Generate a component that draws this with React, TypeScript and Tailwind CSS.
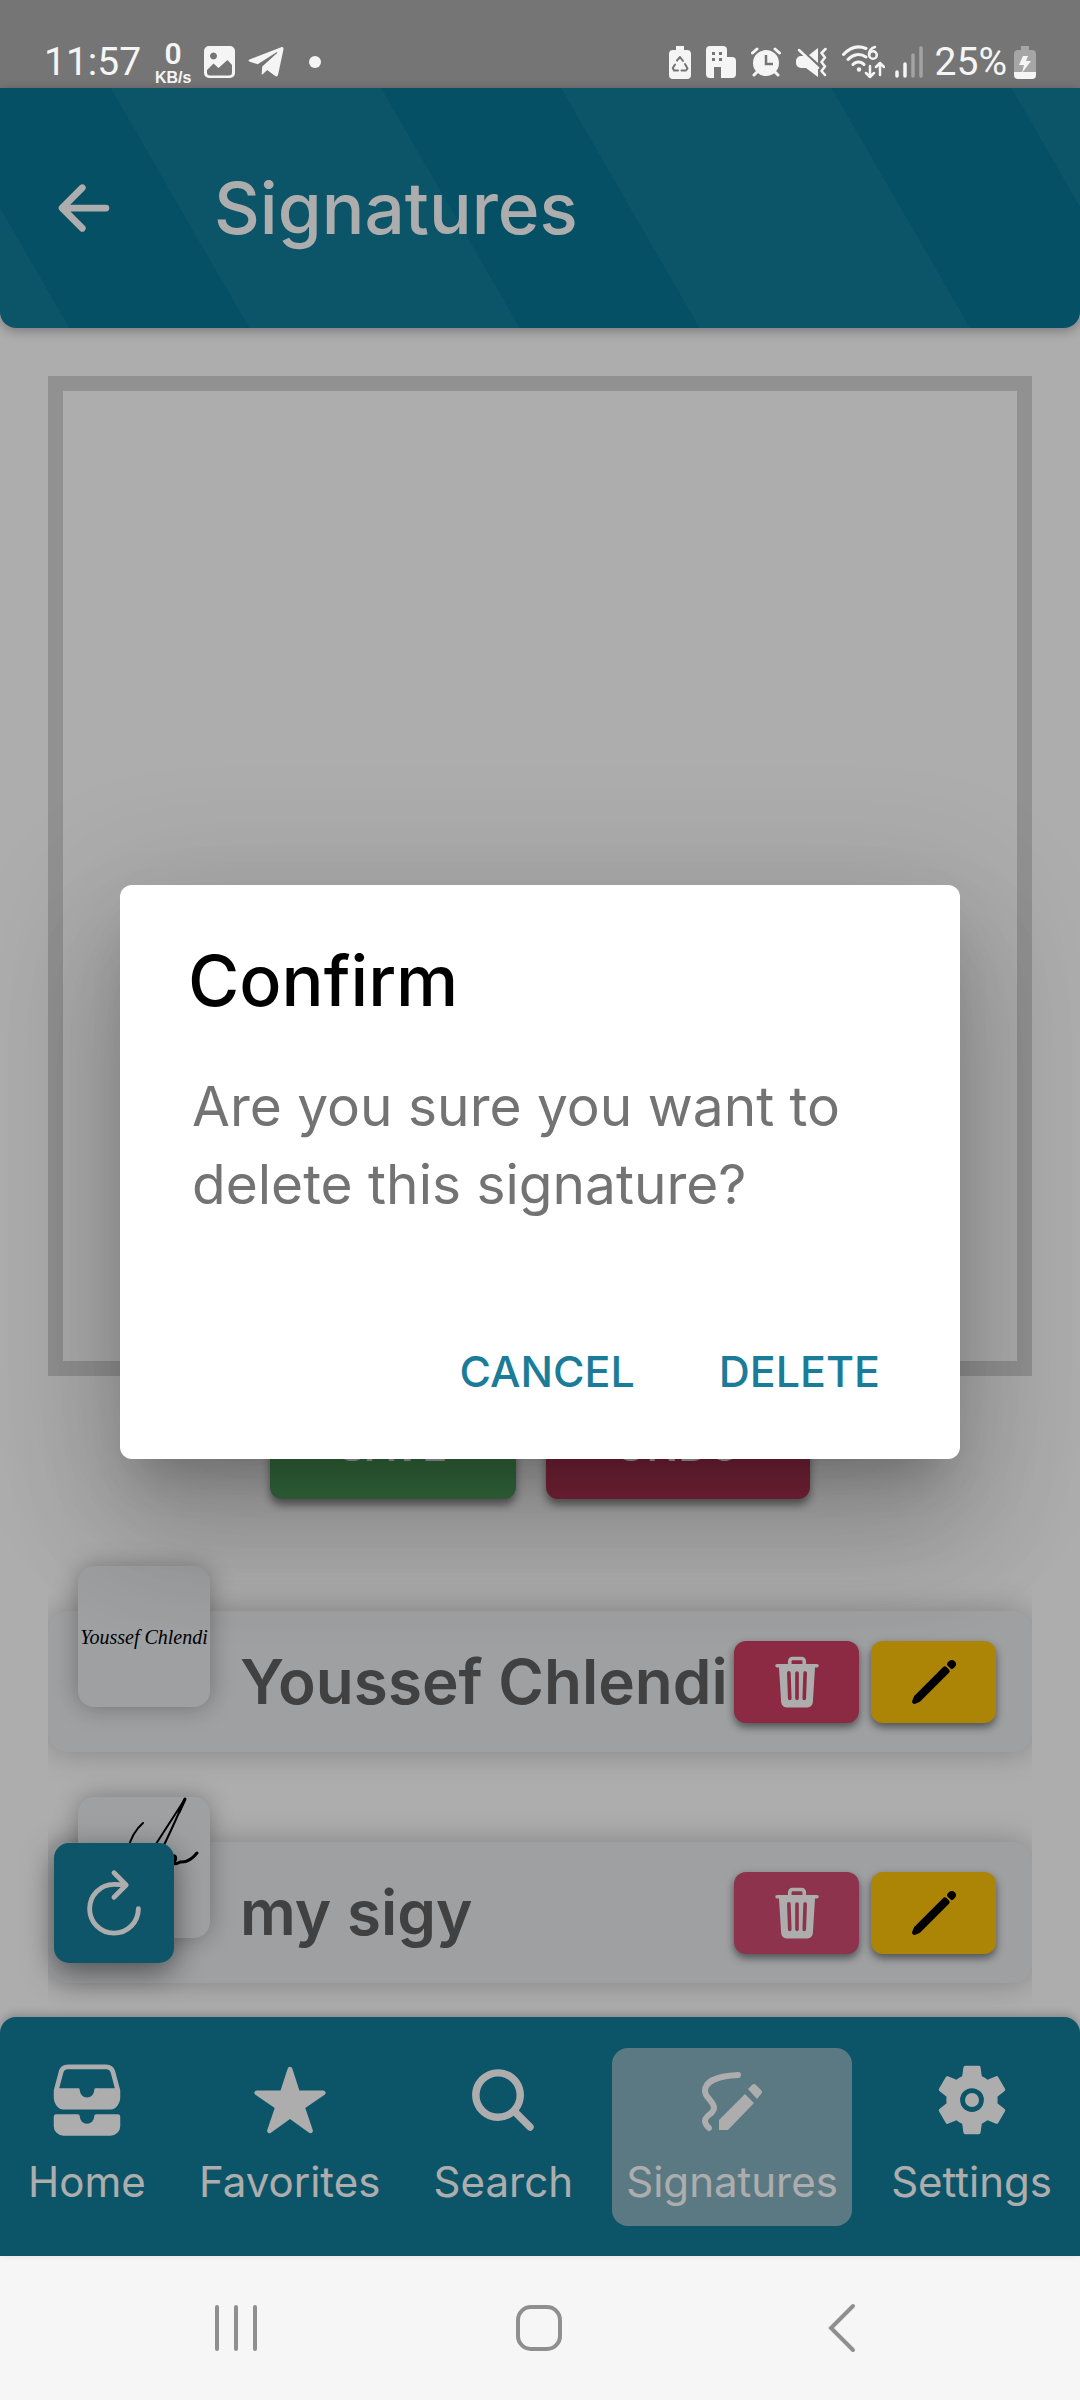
import React from "react";
import {
  IoArrowBack,
  IoFileTrayStacked,
  IoPencil,
  IoRefresh,
  IoSearch,
  IoSettingsSharp,
  IoStar,
  IoTrash,
} from "react-icons/io5";
import { FaTelegramPlane } from "react-icons/fa";

function ImageIcon() {
  return (
    <svg width="31" height="32" viewBox="0 0 31 32" fill="none">
      <path fillRule="evenodd" fill="currentColor" d="M5 0h21a5 5 0 0 1 5 5v22a5 5 0 0 1-5 5H5a5 5 0 0 1-5-5V5a5 5 0 0 1 5-5ZM9.500 6.500a3.500 3.500 0 1 0 .01 0ZM3 24v2.500a3 3 0 0 0 3 3h19a3 3 0 0 0 3-3V19l-4.500-5-9 8-5-4.500Z" />
    </svg>
  );
}

function RecycleBatteryIcon() {
  return (
    <svg width="22" height="33" viewBox="0 0 22 33" fill="none">
      <path fill="currentColor" d="M7 0h8v4h3a4 4 0 0 1 4 4v21a4 4 0 0 1-4 4H4a4 4 0 0 1-4-4V8a4 4 0 0 1 4-4h3Z" />
      <path stroke="#757575" strokeWidth="2" strokeLinecap="round" strokeLinejoin="round" d="M8 14.500 11 11l3 4M16 18l2.500 4.500L17 24.500h-4.500M9 24.500H5L3.800 22 6 18.500" />
    </svg>
  );
}

function BuildingIcon() {
  return (
    <svg width="30" height="32" viewBox="0 0 30 32" fill="none">
      <path fill="currentColor" d="M4 0h13a4 4 0 0 1 4 4v7h5a4 4 0 0 1 4 4v13a4 4 0 0 1-4 4H15V21H8v11H4a4 4 0 0 1-4-4V4a4 4 0 0 1 4-4Z" />
      <path fill="#757575" d="M6 6h3v3H6zM13 6h3v3h-3zM6 12h3v3H6zM13 12h3v3h-3z" />
    </svg>
  );
}

function AlarmIcon() {
  return (
    <svg width="30" height="30" viewBox="0 0 30 30" fill="none">
      <circle cx="15" cy="16" r="13" fill="currentColor" />
      <path stroke="currentColor" strokeWidth="3" strokeLinecap="round" d="M1.500 6 6 2M28.500 6 24 2M6 25l-3 3M24 25l3 3" />
      <path stroke="#757575" strokeWidth="2.500" d="M15 8v9h7" />
    </svg>
  );
}

function MuteIcon() {
  return (
    <svg width="31" height="30" viewBox="0 0 31 30" fill="none">
      <path fill="currentColor" d="M5 9h4l13 12v9L10 21H5a5 5 0 0 1-5-5v-2a5 5 0 0 1 5-5ZM22 1v15l-9-8Z" />
      <path stroke="currentColor" strokeWidth="2.500" strokeLinecap="round" strokeLinejoin="round" d="m3 3 19 18M29.500 2l-4 4 3.500 4.500-3.500 4.500 3.500 4.500-3.500 4.500 3.500 4" />
    </svg>
  );
}

function WifiIcon() {
  return (
    <svg width="43" height="34" viewBox="0 0 43 34" fill="none" stroke="currentColor" strokeLinecap="round">
      <path strokeWidth="3" d="M1.500 9.500C9 1.500 17 .5 24 3.500M6 14.500c5-5.500 12-6.500 18-2.500M11 19.500c3-3.500 8-3.500 11 0" />
      <circle cx="17" cy="24.500" r="2.200" fill="currentColor" stroke="none" />
      <path strokeWidth="2.500" d="M33 2c-4 1-6 4-6 8" />
      <circle cx="31" cy="10" r="3.800" strokeWidth="2.500" />
      <path strokeWidth="2.500" strokeLinejoin="round" d="M28 21v11m-4-4 4 4 4-4M38 30V18m-4 4 4-4 4 4" />
    </svg>
  );
}

function SignalIcon() {
  return (
    <svg width="28" height="32" viewBox="0 0 28 32" strokeLinecap="round" strokeWidth="3.500">
      <path stroke="currentColor" d="M2 26v4M10 18v12" />
      <path stroke="#a3a3a3" d="M18 9v21M26 2v28" />
    </svg>
  );
}

function ChargingBatteryIcon() {
  return (
    <svg width="22" height="33" viewBox="0 0 22 33" fill="none">
      <path fill="#a6a6a6" d="M7 0h8v4h3a4 4 0 0 1 4 4v18H0V8a4 4 0 0 1 4-4h3Z" />
      <path fill="currentColor" d="M0 26h22v3a4 4 0 0 1-4 4H4a4 4 0 0 1-4-4Z" />
      <path fill="currentColor" d="M9 10h5l-2 5h5L8 27l2-8H5Z" />
    </svg>
  );
}

function StatusBar() {
  return (
    <div className="flex h-[88px] items-center justify-between bg-[#757575] pt-[36px] pr-[44px] pl-[44px] font-['Roboto',sans-serif] text-[#f5f5f5]">
      <div className="flex items-center">
        <span className="text-[39px] leading-[44px]">11:57</span>
        <div className="ml-[12px] flex w-[40px] flex-col items-center">
          <span className="text-[30px] leading-[32px] font-semibold">0</span>
          <span className="font-['Liberation_Sans',sans-serif] text-[16px] leading-[16px] font-bold">KB/s</span>
        </div>
        <div className="ml-[11px] flex items-center gap-[11px]">
          <ImageIcon />
          <FaTelegramPlane size={40} />
        </div>
        <span className="ml-[23px] size-[12px] rounded-full bg-[#f5f5f5]" />
      </div>
      <div className="flex items-center">
        <div className="mr-[10px] flex items-center gap-[15px]">
          <RecycleBatteryIcon />
          <BuildingIcon />
          <AlarmIcon />
          <MuteIcon />
          <WifiIcon />
        </div>
        <SignalIcon />
        <span className="mr-[7px] ml-[12px] text-[39px] leading-[44px]">25%</span>
        <ChargingBatteryIcon />
      </div>
    </div>
  );
}

function DrawIcon() {
  return (
    <svg width="76" height="76" viewBox="0 0 76 76" fill="none">
      <path stroke="currentColor" strokeWidth="6" strokeLinecap="round" d="M44 13C22 14 11 20 11 29c0 7 9 10 9 17 0 6-9 7-9 13 0 3 2 5 4 7" />
      <path fill="currentColor" d="M25 68V58l26-26 9 9-26 27ZM54 27l4-4q2-2 4 0l5 5q2 2 0 4l-4 5Z" />
    </svg>
  );
}

function GearIcon() {
  return (
    <span className="relative flex items-center justify-center">
      <IoSettingsSharp size={76} />
      <span className="absolute size-[14px] rounded-full bg-current" />
    </span>
  );
}

function SignatureScribble() {
  return (
    <svg width="132" height="141" viewBox="0 0 132 141" fill="none" stroke="#000" strokeLinecap="round" strokeLinejoin="round" role="img" aria-label="Handwritten signature">
      <path strokeWidth="2" d="M65 26C58 32 53 40 50 52M107 2C100 18 93 34 85 50M107 2 76 50" />
      <path strokeWidth="3" d="M107 2l-6 13M92 60c6-3 7 0 4 6 1 2 4 0 6-1 8 1 13-4 17-9" />
    </svg>
  );
}

interface Signature {
  name: string;
  typed: boolean;
  pressed: boolean;
}

const signatures: Signature[] = [
  { name: "Youssef Chlendi", typed: true, pressed: true },
  { name: "my sigy", typed: false, pressed: false },
];

function SignatureRow({ name, typed, pressed }: Signature) {
  return (
    <li className="flex h-[141px] items-center rounded-[20px] bg-[#e9ecef] pr-[36px] pl-[30px] shadow-[0_0_30px_rgba(0,0,0,0.25)]">
      <div className="mb-[90px] flex h-[141px] w-[132px] shrink-0 items-center justify-center overflow-hidden rounded-[16px] bg-[#e9ecef] shadow-[0_0_24px_rgba(0,0,0,0.3)]">
        {typed ? (
          <span className="font-['Liberation_Serif',serif] text-[20px] whitespace-nowrap text-black italic">{name}</span>
        ) : (
          <SignatureScribble />
        )}
      </div>
      <span className="ml-[30px] flex-1 text-[62px] leading-[90px] font-semibold whitespace-nowrap text-[#616161]">{name}</span>
      <div className="flex gap-[12px]">
        <button
          aria-label={`Delete ${name}`}
          className={`flex h-[82px] w-[125px] items-center justify-center rounded-[12px] text-white shadow-[0_4px_9px_rgba(0,0,0,0.5)] ${pressed ? "bg-[#cf3e64]" : "bg-[#d24c72]"}`}
        >
          <IoTrash size={58} />
        </button>
        <button aria-label={`Edit ${name}`} className="flex h-[82px] w-[125px] items-center justify-center rounded-[12px] bg-[#ffc409] text-black shadow-[0_4px_9px_rgba(0,0,0,0.5)]">
          <IoPencil size={54} />
        </button>
      </div>
    </li>
  );
}

const tabs = [
  { label: "Home", icon: <IoFileTrayStacked size={76} />, active: false },
  { label: "Favorites", icon: <IoStar size={76} />, active: false },
  { label: "Search", icon: <IoSearch size={76} />, active: false },
  { label: "Signatures", icon: <DrawIcon />, active: true },
  { label: "Settings", icon: <GearIcon />, active: false },
];

function TabBar() {
  return (
    <nav className="relative flex h-[239px] items-center justify-between rounded-t-[16px] bg-[#127c9a] px-[14px] shadow-[0_-3px_9px_rgba(0,0,0,0.2)]">
      {tabs.map((tab) => (
        <a
          key={tab.label}
          href={`#${tab.label.toLowerCase()}`}
          aria-current={tab.active ? "page" : undefined}
          className={`flex h-[178px] flex-col items-center rounded-[16px] px-[14px] pt-[14px] text-white ${tab.active ? "bg-[#87b3c2]" : ""}`}
        >
          {tab.icon}
          <span className="mt-[14px] text-[42px] leading-[60px]">{tab.label}</span>
        </a>
      ))}
    </nav>
  );
}

function ConfirmDialog() {
  return (
    <div
      role="alertdialog"
      aria-labelledby="confirm-title"
      aria-describedby="confirm-text"
      className="mx-[120px] w-full rounded-[12px] bg-white pt-[46px] pb-[34px] shadow-[0_33px_45px_-21px_rgba(0,0,0,0.2),0_72px_114px_9px_rgba(0,0,0,0.14),0_27px_138px_24px_rgba(0,0,0,0.12)]"
    >
      <h2 id="confirm-title" className="px-[68px] text-[70px] leading-[100px] font-medium text-black">
        Confirm
      </h2>
      <p id="confirm-text" className="mt-[36px] px-[72px] text-[55px] leading-[78px] text-[#737373]">
        Are you sure you want to delete this signature?
      </p>
      <div className="mt-[94px] flex justify-end gap-[20px] pr-[48px]">
        <button className="h-[108px] px-[32px] text-[43px] font-medium text-[#1a7c99]">CANCEL</button>
        <button className="h-[108px] px-[32px] text-[43px] font-medium text-[#1a7c99]">DELETE</button>
      </div>
    </div>
  );
}

function SystemNav() {
  return (
    <div className="grid h-[144px] grid-cols-3 items-center justify-items-center bg-[#f6f6f6] pr-[87px] pl-[84px] text-[#8f8f8f]">
      <button aria-label="Recent apps">
        <svg width="44" height="48" viewBox="0 0 44 48" stroke="currentColor" strokeWidth="4" strokeLinecap="round">
          <path d="M3 3v42M22 3v42M41 3v42" />
        </svg>
      </button>
      <button aria-label="Home screen">
        <svg width="48" height="48" viewBox="0 0 48 48" fill="none" stroke="currentColor" strokeWidth="4">
          <rect x="3" y="3" width="42" height="42" rx="13" />
        </svg>
      </button>
      <button aria-label="Back">
        <svg width="28" height="50" viewBox="0 0 28 50" fill="none" stroke="currentColor" strokeWidth="4" strokeLinecap="round">
          <path d="M25 3 3 25l22 22" />
        </svg>
      </button>
    </div>
  );
}

export default function App() {
  return (
    <div className="flex min-h-screen flex-col bg-white font-['Inter',sans-serif]">
      <StatusBar />
      <div className="relative flex flex-1 flex-col">
        <header className="flex h-[240px] items-center rounded-b-[16px] bg-[repeating-linear-gradient(60deg,#127c9a_0px,#127c9a_60px,#097797_60px,#097797_216px,#127c9a_216px,#127c9a_390px)] pl-[48px] text-white shadow-[0_3px_12px_rgba(0,0,0,0.3)]">
          <button aria-label="Go back">
            <IoArrowBack size={72} />
          </button>
          <h1 className="ml-[94px] text-[71px] leading-[100px] font-medium">Signatures</h1>
        </header>
        <main className="flex flex-1 flex-col px-[48px] pt-[48px]">
          <div className="h-[1000px] border-[15px] border-[#d6d6d6]" />
          <div className="mt-[15px] flex justify-center gap-[30px] text-[42px] font-medium text-white">
            <button className="h-[108px] w-[246px] rounded-[12px] bg-[#50a35f] shadow-[0_6px_9px_rgba(0,0,0,0.45)]">SAVE</button>
            <button className="h-[108px] w-[264px] rounded-[12px] bg-[#b93658] shadow-[0_6px_9px_rgba(0,0,0,0.45)]">UNDO</button>
          </div>
          <ul className="mt-[30px] flex flex-col gap-[90px] overflow-hidden pt-[82px] pb-[34px]">
            {signatures.map((signature) => (
              <SignatureRow key={signature.name} {...signature} />
            ))}
          </ul>
        </main>
        <button
          aria-label="Refresh"
          className="absolute bottom-[293px] left-[54px] flex size-[120px] items-center justify-center rounded-[15px] bg-[#167e9d] text-white shadow-[0_9px_30px_rgba(0,0,0,0.5)]"
        >
          <IoRefresh size={78} />
        </button>
        <TabBar />
        <div className="absolute inset-0 flex items-center bg-black/32">
          <ConfirmDialog />
        </div>
      </div>
      <SystemNav />
    </div>
  );
}
